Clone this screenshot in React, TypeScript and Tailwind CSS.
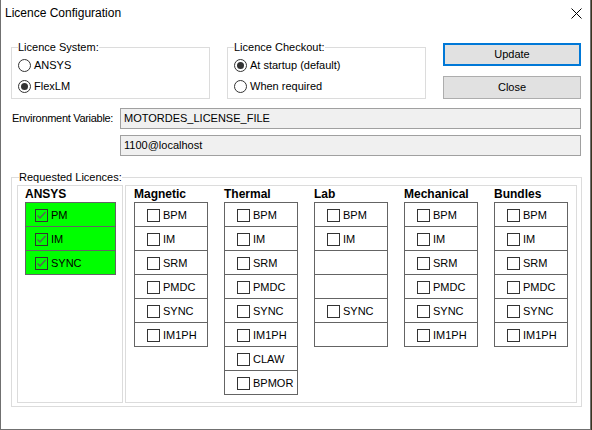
import clsx from 'clsx';

const sans = "font-['Liberation_Sans',Arial,sans-serif]";

type Col = { title: string; items: (string | null)[] };

const columns: Col[] = [
  { title: 'Magnetic', items: ['BPM', 'IM', 'SRM', 'PMDC', 'SYNC', 'IM1PH'] },
  { title: 'Thermal', items: ['BPM', 'IM', 'SRM', 'PMDC', 'SYNC', 'IM1PH', 'CLAW', 'BPMOR'] },
  { title: 'Lab', items: ['BPM', 'IM', null, null, 'SYNC', null] },
  { title: 'Mechanical', items: ['BPM', 'IM', 'SRM', 'PMDC', 'SYNC', 'IM1PH'] },
  { title: 'Bundles', items: ['BPM', 'IM', 'SRM', 'PMDC', 'SYNC', 'IM1PH'] },
];

function Radio({ label, checked }: { label: string; checked?: boolean }) {
  return (
    <div className="flex items-center h-[21px]">
      <span className="w-[13px] h-[13px] rounded-full border border-[#333] bg-white flex items-center justify-center">
        {checked && <span className="w-[7px] h-[7px] rounded-full bg-[#333]" />}
      </span>
      <span className="ml-[3px]">{label}</span>
    </div>
  );
}

function CheckBox({ checked }: { checked?: boolean }) {
  return (
    <span
      className={clsx(
        'w-[13px] h-[13px] border border-[#333] flex items-center justify-center shrink-0',
        !checked && 'bg-white'
      )}
    >
      {checked && (
        <svg width="11" height="11" viewBox="0 0 11 11">
          <polyline points="1.5,5.5 4,8 9.5,2" fill="none" stroke="#5a5a5a" strokeWidth="1.3" />
        </svg>
      )}
    </span>
  );
}

function LicTable({
  items,
  checked,
  className,
  pad,
}: {
  items: (string | null)[];
  checked?: boolean;
  className?: string;
  pad: string;
}) {
  return (
    <div className={clsx('border border-[#646464]', className)}>
      {items.map((it, i) => (
        <div
          key={i}
          className={clsx(
            'flex items-center pt-[1px]',
            pad,
            i === 0 ? 'h-[23px]' : 'h-[24px] border-t border-[#646464]'
          )}
        >
          {it && (
            <>
              <CheckBox checked={checked} />
              <span className="ml-[3px] text-[11px] text-black">{it}</span>
            </>
          )}
        </div>
      ))}
    </div>
  );
}

function TextField({ value, className }: { value: string; className?: string }) {
  return (
    <div
      className={clsx(
        'w-[461px] h-[21px] border border-[#a0a0a0] bg-[#f0f0f0] flex items-center pl-[3px]',
        className
      )}
    >
      {value}
    </div>
  );
}

export default function App() {
  return (
    <div className={clsx('w-[592px] h-[430px] bg-[#3a3320] text-[11px] text-black', sans)}>
      <div className="w-[591px] h-[430px] bg-white border-l border-r border-b border-[#707070] flex flex-col">
        {/* Title bar */}
        <div className="h-[26px] flex items-center justify-between pl-[4px] pr-[8px]">
          <span className="text-[12px]">Licence Configuration</span>
          <svg width="11" height="11" viewBox="0 0 11 11">
            <path d="M0.5 0.5 L10.5 10.5 M10.5 0.5 L0.5 10.5" stroke="#000" strokeWidth="1" />
          </svg>
        </div>

        {/* Top row */}
        <div className="mt-[14px] h-[59px] flex items-start">
          <fieldset className="ml-[10px] w-[199px] h-[59px] border border-[#dcdcdc] px-[6px]">
            <legend className="leading-[15px] px-0">Licence System:</legend>
            <Radio label="ANSYS" />
            <Radio label="FlexLM" checked />
          </fieldset>
          <fieldset className="ml-[17px] w-[199px] h-[59px] border border-[#dcdcdc] px-[6px]">
            <legend className="leading-[15px] px-0">Licence Checkout:</legend>
            <Radio label="At startup (default)" checked />
            <Radio label="When required" />
          </fieldset>
          <div className="ml-[17px] w-[138px] flex flex-col">
            <button className="mt-[3px] h-[23px] bg-[#e1e1e1] border-2 border-[#0078d7] text-[11px]">
              Update
            </button>
            <button className="mt-[10px] h-[23px] bg-[#e1e1e1] border border-[#adadad] text-[11px]">
              Close
            </button>
          </div>
        </div>

        {/* Environment variable */}
        <div className="mt-[9px] flex items-center">
          <span className="w-[119px] pl-[11px] tracking-[-0.3px]">Environment Variable:</span>
          <TextField value="MOTORDES_LICENSE_FILE" />
        </div>
        <TextField value="1100@localhost" className="mt-[6px] ml-[119px]" />

        {/* Requested licences */}
        <fieldset className="mt-[14px] ml-[10px] w-[571px] h-[237px] border border-[#dcdcdc] pl-[5px] pr-[4px] pb-[3px]">
          <legend className="leading-[15px] px-0 ml-[2px]">Requested Licences:</legend>
          <div className="flex gap-[2px] h-[218px]">
            <div className="w-[106px] h-full border border-[#dcdcdc] pl-[7px]">
              <div className="h-[16px] leading-[16px] text-[12px] font-bold">ANSYS</div>
              <LicTable
                items={['PM', 'IM', 'SYNC']}
                checked
                className="w-[91px] bg-[#00ff00]"
                pad="pl-[9px]"
              />
            </div>
            <div className="w-[452px] h-full border border-[#dcdcdc] pl-[8px] flex gap-[16px]">
              {columns.map((c) => (
                <div key={c.title} className="w-[74px]">
                  <div className="h-[16px] leading-[16px] text-[12px] font-bold">{c.title}</div>
                  <LicTable items={c.items} className="w-[74px] bg-white" pad="pl-[12px]" />
                </div>
              ))}
            </div>
          </div>
        </fieldset>
      </div>
    </div>
  );
}
